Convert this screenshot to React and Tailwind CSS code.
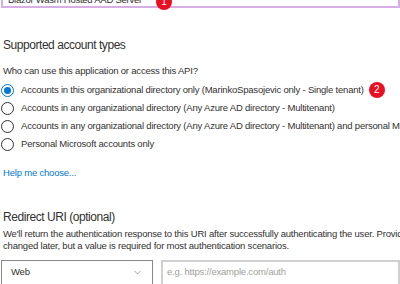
import React from "react";
import { ChevronDown } from "lucide-react";

const options = [
  {
    label: "Accounts in this organizational directory only (MarinkoSpasojevic only - Single tenant)",
    checked: true,
    badge: "2",
  },
  { label: "Accounts in any organizational directory (Any Azure AD directory - Multitenant)" },
  {
    label:
      "Accounts in any organizational directory (Any Azure AD directory - Multitenant) and personal Microsoft accounts (e.g. Skype, Xbox)",
  },
  { label: "Personal Microsoft accounts only" },
];

const Badge = ({ children, className = "" }) => (
  <span
    className={`flex h-[16px] w-[16px] shrink-0 items-center justify-center rounded-full bg-[#e81123] text-[10px] leading-none text-white ${className}`}
  >
    {children}
  </span>
);

const Radio = ({ checked }) => (
  <span
    className={`flex h-[13px] w-[13px] shrink-0 items-center justify-center rounded-full border ${
      checked ? "border-[#0078d4]" : "border-[#323130]"
    }`}
  >
    {checked && <span className="h-[7px] w-[7px] rounded-full bg-[#0078d4]" />}
  </span>
);

export default function App() {
  return (
    <div className="h-[284px] w-[400px] overflow-hidden bg-white font-['Liberation_Sans',Arial,sans-serif] text-[#323130]">
      <div className="relative -mt-[14px] ml-[1px] flex h-[22px] items-end border-2 border-[#d7aee6] pb-[1px] pl-[5px]">
        <span className="whitespace-nowrap text-[9.5px] leading-[10px] tracking-[-0.25px]">
          Blazor Wasm Hosted AAD Server
        </span>
        <Badge className="absolute left-[153px] top-[6px]">1</Badge>
      </div>

      <h2 className="ml-[3px] mt-[29px] text-[12px] leading-[16px] tracking-[-0.45px]">
        Supported account types
      </h2>

      <p className="ml-[3px] mt-[11px] text-[9.5px] leading-[14px] tracking-[-0.2px]">
        Who can use this application or access this API?
      </p>

      <div className="mt-[3px] flex flex-col">
        {options.map((o) => (
          <label key={o.label} className="flex h-[18px] items-center whitespace-nowrap pl-[1px]">
            <Radio checked={o.checked} />
            <span className="ml-[7px] text-[9.5px] tracking-[-0.2px]">{o.label}</span>
            {o.badge && <Badge className="ml-[5px]">{o.badge}</Badge>}
          </label>
        ))}
      </div>

      <a className="ml-[3px] mt-[13px] block text-[9.5px] leading-[14px] tracking-[-0.2px] text-[#0078d4]">
        Help me choose...
      </a>

      <h2 className="ml-[3px] mt-[29px] text-[12px] leading-[16px] tracking-[-0.45px]">
        Redirect URI (optional)
      </h2>

      <div className="ml-[3px] mt-[3px] whitespace-nowrap text-[9.5px] leading-[12px] tracking-[-0.2px]">
        <div>
          We'll return the authentication response to this URI after successfully authenticating the user. Providing
          this now is optional and it can be
        </div>
        <div>changed later, but a value is required for most authentication scenarios.</div>
      </div>

      <div className="mt-[8px] flex gap-[8px] pl-[1px]">
        <div className="flex h-[26px] w-[152px] shrink-0 items-start justify-between border border-[#8a8886] pl-[9px] pr-[9px] pt-[4px]">
          <span className="text-[9.5px] tracking-[-0.2px]">Web</span>
          <ChevronDown size={11} strokeWidth={1.25} className="mt-[2px] text-[#605e5c]" />
        </div>
        <div className="flex h-[26px] flex-1 items-start border-2 border-[#d2d0ce] pl-[4px] pt-[3px]">
          <span className="whitespace-nowrap text-[9.5px] tracking-[-0.2px] text-[#a19f9d]">
            e.g. https://example.com/auth
          </span>
        </div>
      </div>
    </div>
  );
}
